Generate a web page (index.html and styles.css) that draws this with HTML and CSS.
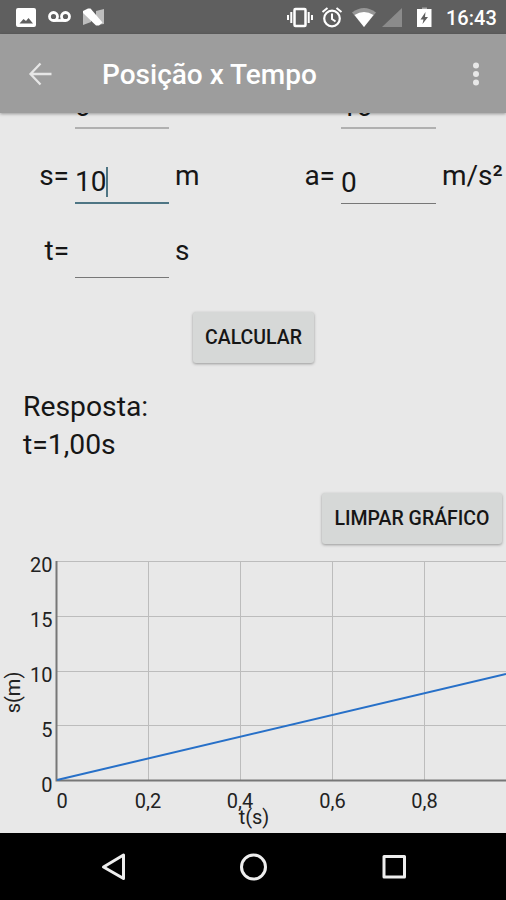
FILE: index.html
```html
<!DOCTYPE html>
<html lang="pt-BR">
<head>
<meta charset="utf-8">
<title>Posição x Tempo</title>
<link rel="stylesheet" href="styles.css">
</head>
<body>
<div class="screen">
  <div class="status">
    <svg class="status-left" width="110" height="34" viewBox="0 0 110 34">
      <path fill="#fff" fill-rule="evenodd" d="M18 8h16a2 2 0 0 1 2 2v15a2 2 0 0 1-2 2H18a2 2 0 0 1-2-2V10a2 2 0 0 1 2-2zM19.500 23.500h13.500l-4.500-5.500-2.500 3-2.500-2z"/>
      <g fill="none" stroke="#fff" stroke-width="2.800"><circle cx="53.500" cy="16.500" r="4"/><circle cx="65.500" cy="16.500" r="4"/><path d="M53.500 20.500h12"/></g>
      <path fill="#bdbdbd" d="M83 11l8 3v8l-8 3zM96 11l8-2v15l-8 1z"/>
      <path fill="#fff" d="M83 11l5-2.500h2.500l12 14-3.500 3h-3L83 13z"/>
    </svg>
    <div class="status-right">
      <svg width="120" height="34" viewBox="285 0 120 34" class="signals">
        <rect x="294.500" y="9" width="11" height="17" rx="1" fill="none" stroke="#fff" stroke-width="2.500"/>
        <path d="M288 15v5M291.300 12v11M308.700 12v11M312 15v5" stroke="#fff" stroke-width="2"/>
        <circle cx="332" cy="18.500" r="7.800" fill="none" stroke="#fff" stroke-width="2.200"/>
        <path d="M332 13.500v5.500l3.500 2.500M322.500 12l5-4M336.500 8l5 4" fill="none" stroke="#fff" stroke-width="2"/>
        <path fill="#969696" d="M352 12.500q12-9 24 0L364 27z"/>
        <path fill="#fff" d="M354.500 15q9.500-6 19 0L364 27z"/>
        <path fill="#8b8b8b" d="M402 8v19h-20z"/>
      </svg>
      <svg width="20" height="34" viewBox="414 0 20 34">
        <path fill="#a8a8a8" d="M422 7.500h5V9h-5z"/>
        <path fill="#fff" d="M417 9h14.500v18H417z"/>
        <path fill="#5f5f5f" d="M425.500 12l-5 7.500h3L422.500 24l5.500-7h-3z"/>
      </svg>
      <span class="clock">16:43</span>
    </div>
  </div>
  <header class="appbar">
    <svg class="back" width="24" height="24" viewBox="0 0 24 24"><path d="M12.500 1.500L2.500 12l10 10.500M2.500 12h21" fill="none" stroke="#e6e6e6" stroke-width="2.300"/></svg>
    <h1 class="title">Posição x Tempo</h1>
    <svg class="more" width="8" height="24" viewBox="0 0 8 24" fill="#e8e8e8"><circle cx="4" cy="3.500" r="3"/><circle cx="4" cy="12" r="3"/><circle cx="4" cy="20.500" r="3"/></svg>
  </header>
  <main class="content">
    <div class="form">
      <span class="label"></span><span class="field faded">0</span><span class="unit"></span>
      <span class="label"></span><span class="field faded">10</span><span class="unit"></span>
      <span class="label">s=</span><span class="field focused">10<i class="caret"></i></span><span class="unit">m</span>
      <span class="label">a=</span><span class="field">0</span><span class="unit">m/s²</span>
      <span class="label">t=</span><span class="field"></span><span class="unit">s</span>
    </div>
    <button class="btn calc">CALCULAR</button>
    <div class="answer">Resposta:<br>t=1,00s</div>
    <button class="btn clear">LIMPAR GRÁFICO</button>
    <svg class="chart" width="506" height="285" viewBox="0 548 506 285">
      <g class="grid"><path d="M57 561.500H506M57 616.500H506M57 671.500H506M57 725.500H506M148.500 561V780M240.500 561V780M332.500 561V780M424.500 561V780"/></g>
      <path class="axis" d="M56.500 561V780.500H506"/>
      <path class="line" d="M57 780L506 674"/>
      <g class="ticks" text-anchor="end"><text x="52.500" y="572">20</text><text x="52.500" y="627">15</text><text x="52.500" y="682">10</text><text x="52.500" y="737">5</text><text x="52.500" y="791.500">0</text></g>
      <g class="ticks" text-anchor="middle"><text x="62" y="808">0</text><text x="148" y="808">0,2</text><text x="240" y="808">0,4</text><text x="332.500" y="808">0,6</text><text x="424.500" y="808">0,8</text><text x="254" y="824">t(s)</text><text transform="translate(20 692.500) rotate(-90)">s(m)</text></g>
    </svg>
  </main>
  <nav class="navbar">
    <svg width="506" height="67" viewBox="0 833 506 67" fill="none" stroke="#eee" stroke-width="3" stroke-linejoin="round">
      <path d="M123.500 855v23.500L103.500 867z"/><circle cx="253.500" cy="867" r="12"/><rect x="384" y="856.500" width="20.500" height="20.500"/>
    </svg>
  </nav>
</div>
</body>
</html>
```
FILE: styles.css
```css
* { box-sizing: border-box; }
body { margin: 0; font-family: Roboto, "Liberation Sans", sans-serif; color: #161616; }
svg { display: block; flex: none; }
.screen { width: 506px; height: 900px; display: flex; flex-direction: column; overflow: hidden; background: #e8e8e8; }
.status { height: 34px; flex: none; display: flex; justify-content: space-between; background: #5f5f5f; }
.status-right { display: flex; padding-right: 10px; }
.signals { margin-right: 9px; }
.clock { width: 50px; margin-left: 12px; font-size: 20px; font-weight: 500; line-height: 36px; color: #fff; white-space: nowrap; }
.appbar { height: 79px; flex: none; display: flex; align-items: center; padding: 0 26px 0 28px; background: #9d9d9d; box-shadow: 0 1px 3px rgba(0,0,0,.35); position: relative; }
.title { flex: 1; margin: 2px 0 0 50px; font-size: 28px; font-weight: 500; line-height: 36px; color: #fff; }
.content { height: 720px; flex: none; overflow: hidden; display: flex; flex-direction: column; }
.form { flex: none; margin-top: -58px; display: grid; grid-template-columns: 69px 94px 98px 74px 95px 64px; grid-template-rows: 74px 75px 74px; font-size: 28px; }
.label { text-align: right; padding-top: 31px; line-height: 32px; white-space: nowrap; }
.unit { padding: 31px 0 0 12px; line-height: 32px; white-space: nowrap; }
.field { align-self: end; margin-left: 6px; margin-right: -6px; height: 44px; line-height: 44px; padding-top: 2px; border-bottom: 1px solid #777; display: flex; align-items: center; white-space: nowrap; }
.faded { border-bottom: 2px solid #b0b0b0; }
.focused { border-bottom: 2px solid #4e7584; }
.caret { width: 2px; height: 30px; background: #4e7584; }
.btn { flex: none; border: 0; border-radius: 3px; padding: 0; background: #d6d8d7; color: #161616; font: 500 19.5px/52px Roboto, sans-serif; height: 51px; box-shadow: 0 1px 3px rgba(0,0,0,.35); white-space: nowrap; }
.calc { width: 121px; margin: 34px 0 0 193px; }
.answer { margin: 25px 0 0 23px; font-size: 28.3px; line-height: 38px; }
.clear { width: 180px; margin: 29px 0 0 322px; }
.chart { margin-top: 4px; }
.grid { fill: none; stroke: #bcbcbc; stroke-width: 1; }
.axis { fill: none; stroke: #777; stroke-width: 2; }
.line { fill: none; stroke: #2770c8; stroke-width: 2; }
.ticks { font-size: 20px; fill: #222; }
.navbar { height: 67px; flex: none; background: #000; }
```
